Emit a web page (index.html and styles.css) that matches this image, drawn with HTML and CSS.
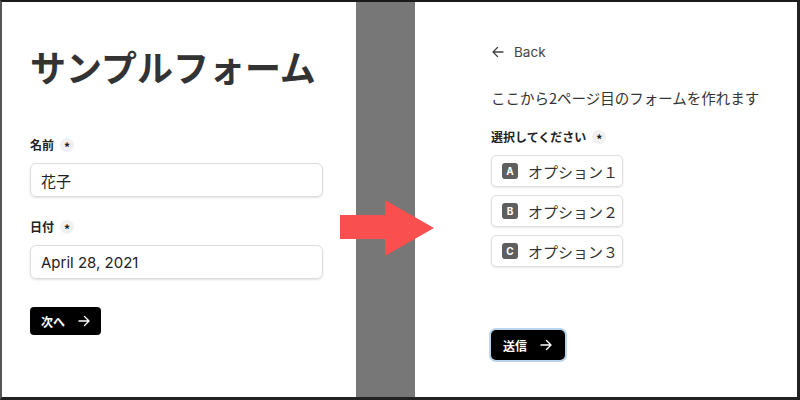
FILE: index.html
```html
<!DOCTYPE html>
<html lang="ja">
<head>
<meta charset="utf-8">
<link rel="stylesheet" href="styles.css">
</head>
<body>
<div class="frame">
  <section class="panel left">
    <h1 class="title">サンプルフォーム</h1>
    <div class="field first">
      <div class="label">名前 <span class="req">*</span></div>
      <div class="input">花子</div>
    </div>
    <div class="field">
      <div class="label">日付 <span class="req">*</span></div>
      <div class="input latin">April 28, 2021</div>
    </div>
    <div class="btn next">次へ <svg class="arr" width="14" height="14" viewBox="0 0 14 14"><path d="M2 7h10M7.5 2.5L12 7l-4.5 4.5" fill="none" stroke="#fff" stroke-width="1.4" stroke-linecap="round" stroke-linejoin="round"/></svg></div>
  </section>
  <div class="divider"></div>
  <section class="panel right">
    <div class="back"><svg width="14" height="14" viewBox="0 0 14 14"><path d="M12 7H2M6.5 2.5L2 7l4.5 4.5" fill="none" stroke="#444" stroke-width="1.3" stroke-linecap="round" stroke-linejoin="round"/></svg><span>Back</span></div>
    <p class="lead">ここから2ページ目のフォームを作れます</p>
    <div class="label">選択してください <span class="req">*</span></div>
    <div class="options">
      <div class="opt"><span class="key">A</span>オプション１</div>
      <div class="opt"><span class="key">B</span>オプション２</div>
      <div class="opt"><span class="key">C</span>オプション３</div>
    </div>
    <div class="btn submit">送信 <svg class="arr" width="14" height="14" viewBox="0 0 14 14"><path d="M2 7h10M7.5 2.5L12 7l-4.5 4.5" fill="none" stroke="#fff" stroke-width="1.4" stroke-linecap="round" stroke-linejoin="round"/></svg></div>
  </section>
  <svg class="bigarrow" width="96" height="58" viewBox="0 0 96 58"><polygon points="0,15 45,15 45,0 94,28 45,56 45,39 0,39" fill="#f94f4f"/></svg>
</div>
</body>
</html>
```

FILE: styles.css
```css
html, body {
  margin: 0;
  padding: 0;
  background: #fff;
}
body {
  font-family: "Noto Sans CJK JP", "Noto Sans", sans-serif;
  color: #222;
}
.frame {
  position: relative;
  width: 800px;
  height: 400px;
  box-sizing: border-box;
  display: flex;
  border-top: 2px solid #1a1a1a;
  border-left: 2px solid #555;
  border-right: 3px solid #222;
  border-bottom: 3px solid #222;
  overflow: hidden;
}
.panel {
  background: #fff;
  box-sizing: border-box;
}
.left {
  width: 354px;
  padding: 0 33px 0 28px;
}
.divider {
  width: 59px;
  background: #777;
}
.right {
  flex: 1;
  padding: 40px 0 0 76px;
}
.title {
  margin: 42px 0 0 0;
  font-size: 36px;
  line-height: 44px;
  font-weight: 700;
  color: #333;
}
.field {
  margin-top: 21px;
}
.field.first {
  margin-top: 48px;
}
.label {
  display: flex;
  align-items: center;
  font-size: 12px;
  font-weight: 700;
  line-height: 18px;
  color: #222;
}
.req {
  display: inline-flex;
  align-items: center;
  justify-content: center;
  width: 14px;
  height: 14px;
  border-radius: 50%;
  background: #f1f1f1;
  margin-left: 6px;
  font-size: 12px;
  font-weight: 700;
  line-height: 1;
  padding-top: 3px;
  box-sizing: border-box;
}
.input {
  margin-top: 9px;
  height: 34px;
  box-sizing: border-box;
  border: 1px solid #dcdcdc;
  border-radius: 6px;
  box-shadow: 0 1px 2px rgba(0,0,0,0.12);
  padding: 0 10px;
  display: flex;
  align-items: center;
  font-size: 15px;
  color: #222;
}
.input.latin {
  font-family: "Inter", "Noto Sans CJK JP", sans-serif;
  font-size: 15px;
}
.btn {
  display: inline-flex;
  align-items: center;
  gap: 12px;
  background: #000;
  color: #fff;
  font-size: 12px;
  font-weight: 700;
  border-radius: 4px;
  height: 28px;
  box-sizing: border-box;
  padding: 0 10px 0 11px;
}
.next {
  margin-top: 28px;
}
.back {
  display: flex;
  align-items: center;
  gap: 9px;
  font-family: "Inter", sans-serif;
  font-size: 13.5px;
  color: #444;
  line-height: 20px;
}
.lead {
  margin: 25px 0 0 0;
  font-size: 14.5px;
  line-height: 22px;
  color: #333;
}
.right .label {
  margin-top: 19px;
}
.options {
  display: flex;
  flex-direction: column;
  align-items: flex-start;
  gap: 8px;
  margin-top: 9px;
}
.opt {
  display: flex;
  align-items: center;
  height: 32px;
  box-sizing: border-box;
  width: 132px;
  border: 1px solid #dedede;
  border-radius: 5px;
  box-shadow: 0 1px 2px rgba(0,0,0,0.1);
  padding-left: 10px;
  font-size: 15px;
  color: #333;
}
.key {
  display: inline-flex;
  align-items: center;
  justify-content: center;
  width: 16px;
  height: 16px;
  border-radius: 3px;
  background: #5e5e5e;
  color: #fff;
  font-family: "Inter", sans-serif;
  font-size: 10px;
  font-weight: 700;
  margin-right: 10px;
}
.submit {
  margin-top: 63px;
  height: 30px;
  padding: 0 12px 0 12px;
  box-shadow: 0 0 0 2px #b9d4ec;
  border-radius: 5px;
}
.bigarrow {
  position: absolute;
  left: 338px;
  top: 198px;
}
```
